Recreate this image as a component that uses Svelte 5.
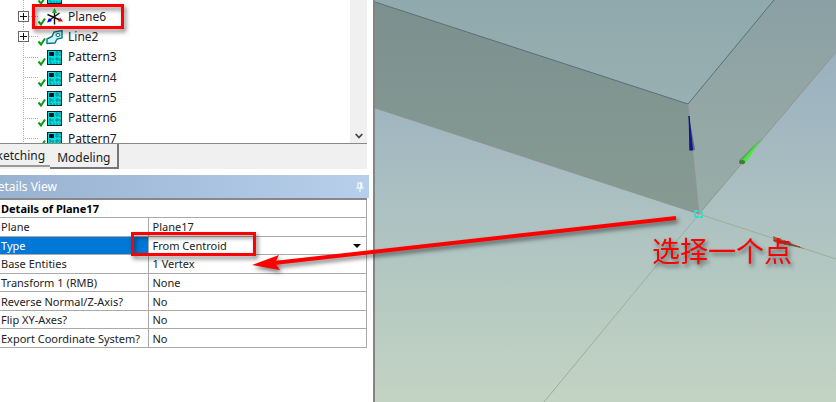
<script lang="ts">
    let nodes = [
        { name: 'Pattern2', icon: 'pattern', expandable: false },
        { name: 'Plane6', icon: 'plane', expandable: true },
        { name: 'Line2', icon: 'line', expandable: true },
        { name: 'Pattern3', icon: 'pattern', expandable: false },
        { name: 'Pattern4', icon: 'pattern', expandable: false },
        { name: 'Pattern5', icon: 'pattern', expandable: false },
        { name: 'Pattern6', icon: 'pattern', expandable: false },
        { name: 'Pattern7', icon: 'pattern', expandable: false },
    ];

    let details = [
        { label: 'Plane', value: 'Plane17' },
        { label: 'Type', value: 'From Centroid' },
        { label: 'Base Entities', value: '1 Vertex' },
        { label: 'Transform 1 (RMB)', value: 'None' },
        { label: 'Reverse Normal/Z-Axis?', value: 'No' },
        { label: 'Flip XY-Axes?', value: 'No' },
        { label: 'Export Coordinate System?', value: 'No' },
    ];

    let tab = 'Modeling';
    let selected = 'Type';
</script>

<main>
    <section class="side">
        <div class="outline">
            <ul>
                {#each nodes as node}
                    <li>
                        <span class="branch">
                            {#if node.expandable}
                                <button class="expander" aria-label="Expand {node.name}">
                                    <svg viewBox="0 0 11 11" width="11" height="11">
                                        <rect x="0.5" y="0.5" width="10" height="10" fill="#fff" stroke="#666" />
                                        <path d="M2 5.5H9M5.5 2V9" stroke="#111" />
                                    </svg>
                                </button>
                            {/if}
                        </span>
                        <svg class="icon" viewBox="0 0 26 20" width="26" height="20">
                            {#if node.icon === 'pattern'}
                                <rect x="10.5" y="3.5" width="14" height="14" fill="#00e0e0" stroke="#123" />
                                <rect x="12" y="5" width="5" height="4" fill="#012" />
                                <path d="M19 5h2v3h-2zM22 5h2M22 8h2M12 11h2v2h-2M16 11v3M19 11h2v2h-2zM23 11v3M12 15h2v2M16 16h2M20 15v2M22 16h2" fill="none" stroke="#067a80" stroke-width="0.9" />
                            {:else if node.icon === 'plane'}
                                <path d="M17.5 5V17.500M10.500 7.500L23 13" stroke="#111" stroke-width="1.4" />
                                <path d="M22.500 6L12 13.500" stroke="#111" stroke-width="1.4" />
                                <path d="M17.5 1l2.500 5h-5z" fill="#00d010" />
                                <path d="M10 15.500l2-4.500 3 3z" fill="#00f" />
                                <path d="M26 14.500l-5 0 2-4z" fill="#e00" />
                            {:else}
                                <path d="M10 16.500V12L15 9.500 17 5 25 3.500V11L20 12 18 16z" fill="#d0f4f6" stroke="#078" stroke-width="1.4" />
                                <ellipse cx="21" cy="8" rx="2" ry="1.600" fill="#fff" stroke="#078" />
                            {/if}
                            <path d="M1.500 14.500L4 17.500L8 11.500" fill="none" stroke="#099a12" stroke-width="2" />
                        </svg>
                        <span class="name">{node.name}</span>
                    </li>
                {/each}
            </ul>
            <div class="scrollbar">
                <button aria-label="Scroll down">
                    <svg viewBox="0 0 8 6" width="8" height="6">
                        <path d="M0.700 1L4 4.500L7.300 1" fill="none" stroke="#444" stroke-width="1.8" />
                    </svg>
                </button>
            </div>
        </div>

        <div class="tabs">
            <button class:active={tab === 'Sketching'} on:click={() => (tab = 'Sketching')}>Sketching</button>
            <button class:active={tab === 'Modeling'} on:click={() => (tab = 'Modeling')}>Modeling</button>
        </div>

        <header>
            <span>Details View</span>
            <button aria-label="Pin panel">
                <svg viewBox="0 0 8 10" width="8" height="10">
                    <path d="M2 0.500V5.500M2 1H5.500M5 0.500V5.500M0 6H8M4 6V10" fill="none" stroke="#fff" />
                    <path d="M5.500 0.500V6" stroke="#fff" stroke-width="1.5" />
                </svg>
            </button>
        </header>

        <table>
            <colgroup>
                <col class="labels" />
                <col />
            </colgroup>
            <thead>
                <tr><th colspan="2">Details of Plane17</th></tr>
            </thead>
            <tbody>
                {#each details as row}
                    <tr class:selected={row.label === selected}>
                        {#if row.label === 'Type'}
                            <th scope="row"><label for="type">{row.label}</label></th>
                            <td>
                                <div class="dropdown">
                                    <select id="type">
                                        <option>{row.value}</option>
                                    </select>
                                    <svg viewBox="0 0 8 4" width="8" height="4"><path d="M0 0H8L4 4z" /></svg>
                                </div>
                            </td>
                        {:else}
                            <th scope="row">{row.label}</th>
                            <td>{row.value}</td>
                        {/if}
                    </tr>
                {/each}
            </tbody>
        </table>
    </section>

    <section class="viewport">
        <svg viewBox="375 0 461 402" preserveAspectRatio="xMinYMin slice">
            <defs>
                <linearGradient id="sky" x1="0" y1="0" x2="0" y2="1">
                    <stop offset="0" stop-color="#94abb8" />
                    <stop offset="0.250" stop-color="#9fb5c0" />
                    <stop offset="0.500" stop-color="#abc0c1" />
                    <stop offset="0.750" stop-color="#b7cac2" />
                    <stop offset="1" stop-color="#c3d3c3" />
                </linearGradient>
                <linearGradient id="top" x1="0" y1="0" x2="0" y2="1">
                    <stop offset="0" stop-color="#90a9ac" />
                    <stop offset="1" stop-color="#98b0b2" />
                </linearGradient>
                <linearGradient id="front" x1="0" y1="0" x2="0" y2="1">
                    <stop offset="0" stop-color="#7c918f" />
                    <stop offset="1" stop-color="#879b93" />
                </linearGradient>
                <linearGradient id="flank" x1="0" y1="0" x2="0" y2="1">
                    <stop offset="0" stop-color="#8aa0a4" />
                    <stop offset="0.500" stop-color="#94a7a5" />
                    <stop offset="1" stop-color="#97aea7" />
                </linearGradient>
            </defs>
            <rect x="375" width="461" height="402" fill="url(#sky)" />
            <path d="M375 0H774L688 104L375 2z" fill="url(#top)" />
            <path d="M375 2L688 104L699 214L375 108z" fill="url(#front)" />
            <path d="M774 0H836V52L699 214L688 104z" fill="url(#flank)" />
            <path d="M375 2L688 104L774 0" fill="none" stroke="#586f7a" />
            <path d="M375 108L699 214L836 52M688 104L699 214" fill="none" stroke="#948f91" stroke-width="0.9" />
            <path d="M544 402L699 214L836 259" fill="none" stroke="#9fae97" />
            <path d="M689 116L695 150L689 151z" fill="#5e6b82" />
            <path d="M689 116L692.500 150L690 150z" fill="#16168a" stroke="#16168a" />
            <path d="M762 138L739 160L743 165z" fill="#62a367" />
            <path d="M762 138L741 162L745 164z" fill="#4be83c" />
            <ellipse cx="742" cy="162" rx="3" ry="2" fill="#47753f" />
            <path d="M773 236L805 249L774 242z" fill="#a4583f" />
            <path d="M773 240L800 247M780 238V244M785 240V245M790 242V246" stroke="#854438" />
            <path d="M695 211h7v6h-7z" fill="none" stroke="#32dccb" stroke-width="2" stroke-dasharray="3 1" />
        </svg>
    </section>

    <svg class="markup" width="836" height="402">
        <g fill="none" stroke="#f00" stroke-width="3">
            <rect x="33.500" y="5.500" width="89" height="22" />
            <rect x="132.500" y="233.500" width="122" height="21" />
        </g>
        <path d="M274 263L676 218" stroke="#f00" stroke-width="4" />
        <path d="M252 265L279 255L275 263L280 270z" fill="#f00" />
        <text x="652" y="262">选择一个点</text>
    </svg>
</main>

<style>
    :global(body) {
        margin: 0;
        background: #fff;
    }

    main {
        position: relative;
        display: grid;
        grid-template-columns: 373px 1fr;
        min-height: 100vh;
        overflow: hidden;
        font: 12px/16px "Noto Sans", "Open Sans", sans-serif;
        color: #222;
    }

    button {
        padding: 0;
        border: 0;
        background: none;
        font: inherit;
        color: inherit;
    }

    .side {
        overflow: hidden;
        background: #fff;
    }

    .outline {
        display: flex;
        justify-content: space-between;
        height: 143px;
        margin-right: 6px;
        overflow: hidden;
        border-bottom: 1px solid #888;
    }

    /* the list is scrolled, so its first row starts above the panel */
    ul {
        display: grid;
        grid-template-rows: repeat(8, 1fr);
        height: 163px;
        margin: -14px 0 0;
        padding: 0 0 0 18px;
        list-style: none;
    }

    li {
        display: flex;
        align-items: center;
    }

    .branch {
        display: flex;
        align-items: center;
        align-self: stretch;
        width: 20px;
        background:
            repeating-linear-gradient(#aaa 0 1px, #fff 1px 2px) 5px 0 / 1px 100% no-repeat,
            repeating-linear-gradient(90deg, #aaa 0 1px, #fff 1px 2px) 5px 50% / 15px 1px no-repeat;
    }

    .expander {
        display: flex;
    }

    .icon {
        margin-left: -1px;
    }

    .name {
        margin-left: 5px;
    }

    .scrollbar {
        display: flex;
        align-items: flex-end;
        justify-content: center;
        width: 17px;
        background: #f0f0f0;
    }

    .scrollbar button {
        height: 14px;
    }

    .scrollbar svg {
        display: block;
    }

    .tabs {
        display: flex;
        align-items: flex-start;
        height: 25px;
        margin-right: 6px;
        margin-bottom: 6px;
        background: #f0f0f0;
    }

    .tabs button {
        height: 23px;
        padding: 3px 5px 0;
        border-bottom: 2px solid #999;
    }

    .tabs button:first-child {
        margin-left: -15px;
    }

    .tabs .active {
        height: 25px;
        padding: 5px 7px 0;
        border-right: 2px solid #777;
        border-bottom-color: #777;
    }

    header {
        display: flex;
        align-items: center;
        justify-content: space-between;
        height: 23px;
        margin-right: 4px;
        padding-right: 5px;
        background: linear-gradient(90deg, #98b2d1, #b7cfeb);
        color: #fff;
    }

    header span {
        margin-left: -11px;
    }

    header svg {
        display: block;
    }

    table {
        width: 367px;
        height: 150px;
        border-collapse: collapse;
        table-layout: fixed;
        border-top: 2px solid #888;
        border-right: 1px solid #aaa;
        font-size: 11px;
    }

    .labels {
        width: 148px;
    }

    th,
    td {
        padding: 1px 0 0 4px;
        border-bottom: 1px solid #aaa;
        line-height: 16px;
        text-align: left;
        white-space: nowrap;
    }

    th {
        padding-left: 1px;
        font-weight: 400;
    }

    thead th {
        color: #000;
        font-weight: 700;
    }

    tbody th {
        border-right: 1px solid #aaa;
    }

    .selected th {
        background: #0078d7;
        color: #fff;
    }

    .dropdown {
        display: flex;
        align-items: center;
        padding-right: 5px;
    }

    select {
        flex: 1;
        height: 16px;
        padding: 0;
        border: 0;
        appearance: none;
        background: #fff;
        font: inherit;
        color: inherit;
    }

    .viewport {
        position: relative;
        border-left: 2px solid #808686;
    }

    .viewport svg {
        position: absolute;
        width: 100%;
        height: 100%;
    }

    .markup {
        position: absolute;
        top: 0;
        left: 0;
        pointer-events: none;
        filter: drop-shadow(2px 3px 2px rgba(0, 0, 0, 0.5));
    }

    .markup text {
        fill: #f00;
        font: 28px "Noto Sans CJK SC", sans-serif;
    }
</style>
